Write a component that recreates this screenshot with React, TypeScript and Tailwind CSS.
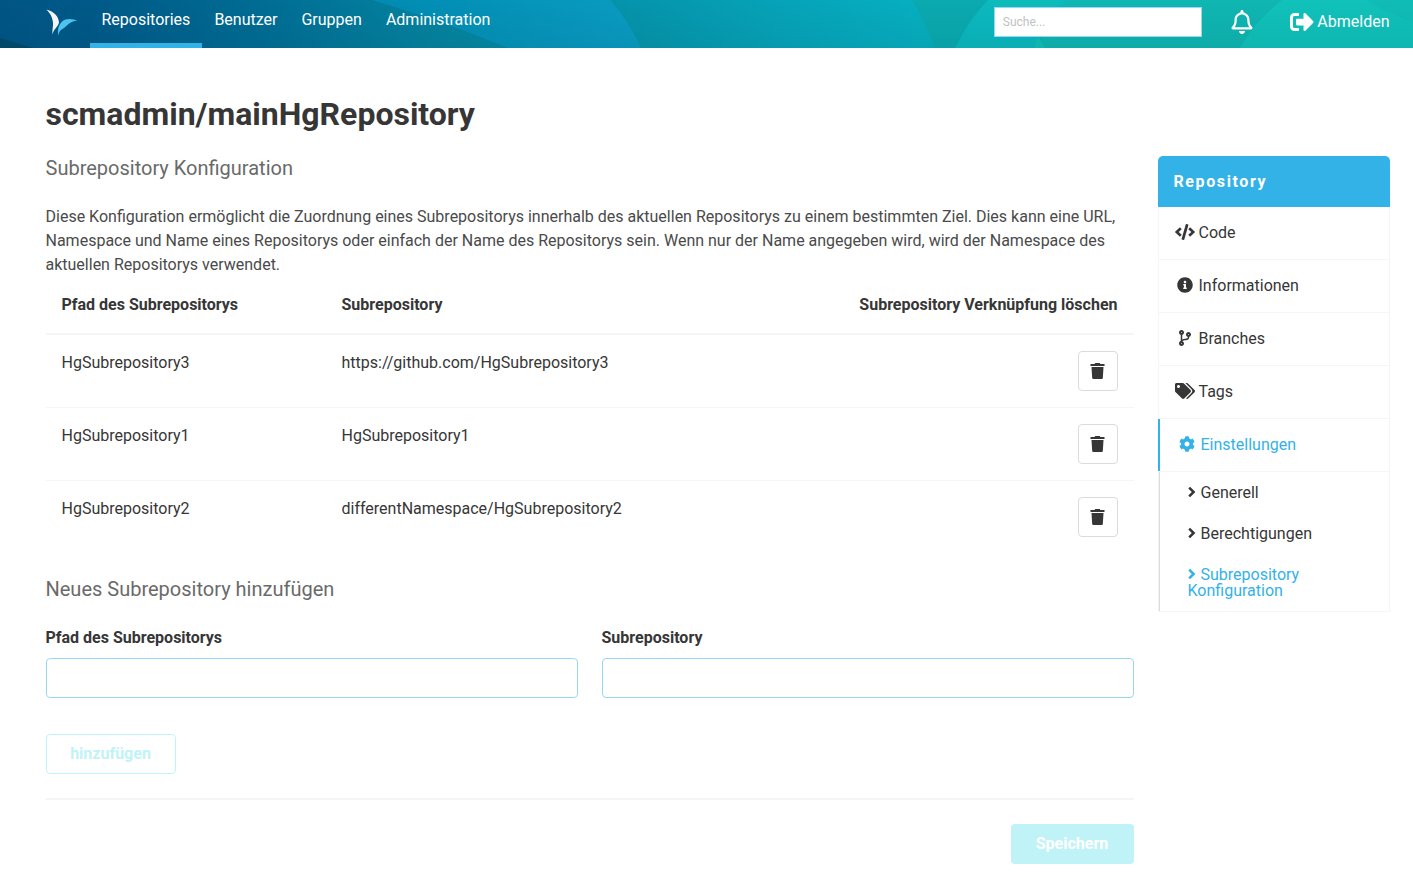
import React from "react";
import {
  FaCode,
  FaInfoCircle,
  FaCodeBranch,
  FaTags,
  FaCog,
  FaRegBell,
  FaSignOutAlt,
} from "react-icons/fa";
import type { IconType } from "react-icons";

const rows = [
  { path: "HgSubrepository3", target: "https://github.com/HgSubrepository3" },
  { path: "HgSubrepository1", target: "HgSubrepository1" },
  { path: "HgSubrepository2", target: "differentNamespace/HgSubrepository2" },
];

const menu: { icon: IconType; label: string; size: string }[] = [
  { icon: FaCode, label: "Code", size: "h-4 w-5" },
  { icon: FaInfoCircle, label: "Informationen", size: "h-4 w-4" },
  { icon: FaCodeBranch, label: "Branches", size: "h-4 w-3.5" },
  { icon: FaTags, label: "Tags", size: "h-4 w-5" },
];

function HeaderBackdrop() {
  return (
    <svg className="absolute inset-0 h-full w-full" viewBox="0 0 1413 48" preserveAspectRatio="none" aria-hidden="true">
      <defs>
        <linearGradient id="base" x1="0" x2="1413" y1="0" y2="0" gradientUnits="userSpaceOnUse">
          <stop offset="0" stopColor="#005585" />
          <stop offset="0.07" stopColor="#005a89" />
          <stop offset="0.18" stopColor="#006c94" />
          <stop offset="0.3" stopColor="#04829f" />
          <stop offset="0.45" stopColor="#0595ac" />
          <stop offset="0.55" stopColor="#06a3b8" />
          <stop offset="0.65" stopColor="#06afc0" />
          <stop offset="0.7" stopColor="#0aacb0" />
          <stop offset="0.85" stopColor="#0fb5b1" />
          <stop offset="1" stopColor="#10bdb6" />
        </linearGradient>
        <linearGradient id="wave" x1="375" x2="641" y1="0" y2="0" gradientUnits="userSpaceOnUse">
          <stop offset="0" stopColor="#008bb2" />
          <stop offset="1" stopColor="#0a9cc2" />
        </linearGradient>
        <linearGradient id="shade" x1="0" x2="0" y1="0" y2="1">
          <stop offset="0" stopColor="#003040" stopOpacity="0" />
          <stop offset="1" stopColor="#003040" stopOpacity="0.08" />
        </linearGradient>
      </defs>
      <rect width="1413" height="48" fill="url(#base)" />
      <path d="M0 38L33 48H0Z" fill="#004a6c" />
      <path d="M372 0H610Q628 20 641 48H508Q446 22 372 0Z" fill="url(#wave)" />
      <path d="M912 0H1000L970 48H935Q926 22 912 0Z" fill="#0aaab0" />
      <path d="M988 0Q970 18 955 48H1034L1040 36Q1047 19 1068 0Z" fill="#0bb9bf" />
      <path d="M988 0H1062L1046 14L994 24V0Z" fill="#0dbcb9" />
      <path d="M1038 36Q1044 44 1045 48H1034Z" fill="#10c0b9" />
      <path d="M1068 0Q1047 19 1040 36L1045 48H1240Q1256 20 1282 0Z" fill="#0fb6b2" />
      <path d="M1282 0Q1256 20 1240 48H1413V22Q1390 14 1366 0Z" fill="#10c2ba" />
      <rect width="1413" height="48" fill="url(#shade)" />
    </svg>
  );
}

function Logo() {
  return (
    <svg className="h-[27px] w-8" viewBox="0 0 32 27" aria-hidden="true">
      <path d="M0.6 0.5C8 2.6 12.8 7.6 13 13.6C12.2 17.8 7.2 20.5 6.6 25.6C6 20 7.6 17 6.8 12.2C6 7.4 3.8 4 0.6 0.5Z" fill="#f6f6f6" />
      <path d="M31.2 11.8C23.4 12.2 21.4 17 17.6 19.2C14.4 21 13 22.6 12.4 26.6C11 20.6 13 15.2 16.4 12.2C20 9 26.6 9.4 31.2 11.8Z" fill="#4cc3f0" />
    </svg>
  );
}

function TrashIcon() {
  return (
    <svg className="mr-px h-4 w-[15px]" viewBox="0 0 15 16" fill="currentColor" aria-hidden="true">
      <path d="M0.5 1H4.6L5.2 0H9.8L10.4 1H14.5V3H0.5Z" />
      <path d="M1.5 4H13.5L12.8 15Q12.7 16 11.7 16H3.3Q2.3 16 2.2 15Z" />
    </svg>
  );
}

function Chevron() {
  return (
    <svg className="mr-[5px] inline h-3 w-2 align-[0px]" viewBox="0 0 8 12" aria-hidden="true">
      <path d="M1.2 1.6L5.6 6L1.2 10.4" fill="none" stroke="currentColor" strokeWidth="2.5" />
    </svg>
  );
}

function Header() {
  return (
    <header className="relative h-12 text-white">
      <HeaderBackdrop />
      <div className="relative flex h-full items-start">
        <div className="w-[90px] pl-[46px] pt-[9px]">
          <Logo />
        </div>
        <nav className="flex h-full leading-6">
          <a className="h-full w-[112.4px] border-b-5 border-[#33b2e8] px-[11.5px] pt-2">Repositories</a>
          <a className="px-3 pt-2">Benutzer</a>
          <a className="px-3 pt-2">Gruppen</a>
          <a className="px-3 pt-2">Administration</a>
        </nav>
        <div className="ml-auto flex items-start pr-[23.5px]">
          <input
            className="mt-[7px] h-[30px] w-52 border border-[#98d8f3] bg-white px-2 text-xs placeholder:text-[#c2c2c2]"
            placeholder="Suche..."
          />
          <FaRegBell className="ml-7 mt-[10px] h-6 w-6" />
          <a className="ml-9 mt-[10px] flex h-6 items-center">
            <FaSignOutAlt className="h-6 w-6" />
            <span className="ml-[3.5px] leading-6">Abmelden</span>
          </a>
        </div>
      </div>
    </header>
  );
}

function Field({ label }: { label: string }) {
  return (
    <label className="flex flex-1 flex-col">
      <span className="mb-2 font-bold leading-6">{label}</span>
      <input className="h-10 rounded border border-[#98d8f3] bg-white px-3" />
    </label>
  );
}

function SubItem({ label, active = false }: { label: string; active?: boolean }) {
  return (
    <li className={active ? "px-7 pt-[13px] pb-3 text-[#33b2e8]" : "px-7 pt-[13px] pb-3"}>
      <Chevron />
      {label}
    </li>
  );
}

function SideMenu() {
  return (
    <aside className="w-[232px] shrink-0">
      <p className="h-[51px] rounded-t-[5px] bg-[#33b2e8] px-4 font-bold leading-[51px] tracking-[1.6px] text-white">
        Repository
      </p>
      <ul className="border-x border-b border-[#f5f5f5] text-[#363636]">
        {menu.map(({ icon: Icon, label, size }) => (
          <li key={label} className="flex h-[53px] items-center border-b border-[#f5f5f5] pl-4 pb-px">
            <span className="-mt-[1.5px] flex w-5 justify-center">
              <Icon className={size} />
            </span>
            <span className="ml-1">{label}</span>
          </li>
        ))}
        <li className="-ml-px">
          <a className="flex h-[53px] items-center border-b border-b-[#f5f5f5] pb-px text-[#33b2e8] shadow-[inset_2px_0_0_#33b2e8]">
            <span className="-mt-[1.5px] ml-[19px] flex w-5 justify-center">
              <FaCog className="h-4 w-4" />
            </span>
            <span className="ml-1">Einstellungen</span>
          </a>
          <ul className="ml-px border-l border-[#dbdbdb] leading-4">
            <SubItem label="Generell" />
            <SubItem label="Berechtigungen" />
            <SubItem label="Subrepository Konfiguration" active />
          </ul>
        </li>
      </ul>
    </aside>
  );
}

export default function App() {
  return (
    <div className="min-h-[881px] bg-white font-['Roboto',sans-serif] text-base text-[#363636]">
      <Header />
      <main className="pl-[45.5px] pr-[23.5px] pt-12">
        <h1 className="mb-6 text-[32px] font-bold leading-9">scmadmin/mainHgRepository</h1>
        <div className="flex gap-6">
          <section className="min-w-0 flex-1">
            <h2 className="mb-[25px] text-xl leading-6 text-[#6a6a6a]">Subrepository Konfiguration</h2>
            <p className="leading-6 text-[#4a4a4a]">
              Diese Konfiguration ermöglicht die Zuordnung eines Subrepositorys innerhalb des aktuellen Repositorys zu
              einem bestimmten Ziel. Dies kann eine URL, Namespace und Name eines Repositorys oder einfach der Name des
              Repositorys sein. Wenn nur der Name angegeben wird, wird der Namespace des aktuellen Repositorys
              verwendet.
            </p>
            <div className="flex h-[58px] border-b-2 border-[#f5f5f5] px-4 pt-4 font-bold leading-6">
              <div className="w-[280px]">Pfad des Subrepositorys</div>
              <div>Subrepository</div>
              <div className="ml-auto">Subrepository Verknüpfung löschen</div>
            </div>
            <div>
              {rows.map((row) => (
                <div
                  key={row.path}
                  className="flex h-[73px] border-b border-[#f5f5f5] px-4 pt-4 leading-6 last:border-transparent"
                >
                  <div className="w-[280px]">{row.path}</div>
                  <div>{row.target}</div>
                  <button className="ml-auto flex h-10 w-10 items-center justify-center rounded border border-[#dbdbdb]">
                    <TrashIcon />
                  </button>
                </div>
              ))}
            </div>
            <h2 className="mb-[25px] mt-[23px] text-xl leading-6 text-[#6a6a6a]">Neues Subrepository hinzufügen</h2>
            <div className="flex gap-6">
              <Field label="Pfad des Subrepositorys" />
              <Field label="Subrepository" />
            </div>
            <button className="mt-9 h-10 w-[130px] rounded border border-[#bff3f8] pb-px font-bold text-[#bff3f8]">
              hinzufügen
            </button>
            <hr className="my-6 h-0.5 border-0 bg-[#f5f5f5]" />
            <div className="flex justify-end">
              <button className="h-10 w-[123px] rounded bg-[#bff3f8] pb-px font-bold text-white">Speichern</button>
            </div>
          </section>
          <SideMenu />
        </div>
      </main>
    </div>
  );
}
